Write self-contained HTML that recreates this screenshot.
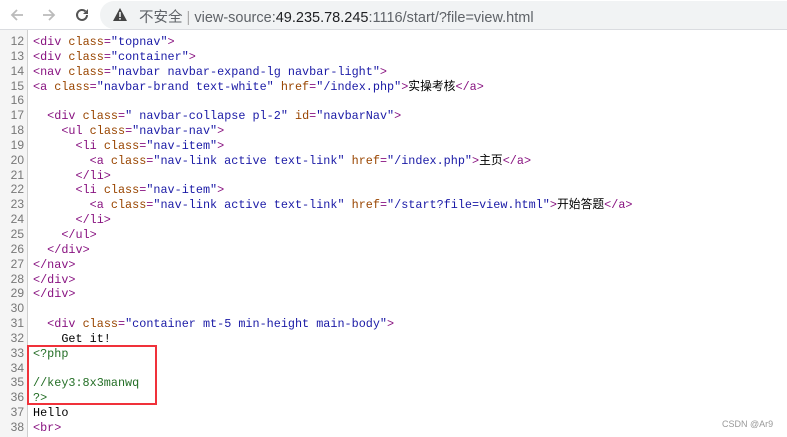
<!DOCTYPE html>
<html><head><meta charset="utf-8"><style>
*{margin:0;padding:0;box-sizing:border-box}
body{width:787px;height:437px;overflow:hidden;background:#fff;font-family:"Liberation Sans","Noto Sans CJK SC",sans-serif;position:relative}
.bar{position:absolute;left:0;top:0;width:787px;height:30px;background:#fff;border-bottom:1px solid #dadce0}
.pill{position:absolute;left:100px;top:1px;width:700px;height:28px;background:#f1f3f4;border-radius:14px}
.url{position:absolute;left:139px;top:6px;font-size:14.5px;color:#5f6368;white-space:nowrap}
.url b{font-weight:normal;color:#202124}
.gut{position:absolute;left:0;top:30px;width:28px;height:407px;background:#f5f5f5;border-right:1px solid #cfcfcf}
.code{position:absolute;left:0;top:34px;font-family:"Liberation Mono","Noto Sans CJK SC",monospace;font-size:11.8px;line-height:14.85px;white-space:pre}
.code div{height:14.85px;overflow:visible}
.ln{display:inline-block;width:24px;text-align:right;color:#777;font-family:"Liberation Sans",sans-serif;font-size:12px;margin-right:9px}
.t{color:#881280}.a{color:#994500}.v{color:#1a1aa6}.c{color:#236e25}
.box{position:absolute;left:27px;top:345px;width:130px;height:60px;border:2px solid #f0313a}
.wm{position:absolute;left:722px;top:419px;font-size:9px;color:#999}
</style></head><body>
<div class="bar">
<svg style="position:absolute;left:9px;top:7px" width="16" height="16" viewBox="0 0 16 16"><path d="M14 8H3M8 3L3 8l5 5" stroke="#bbb" stroke-width="1.8" fill="none"/></svg>
<svg style="position:absolute;left:41px;top:7px" width="16" height="16" viewBox="0 0 16 16"><path d="M2 8h11M8 3l5 5-5 5" stroke="#bbb" stroke-width="1.8" fill="none"/></svg>
<svg style="position:absolute;left:73px;top:6px" width="18" height="18" viewBox="0 0 18 18"><path d="M14 9a5 5 0 1 1-1.5-3.6" stroke="#555" stroke-width="2" fill="none"/><path d="M15 3v5h-5z" fill="#555"/></svg>
<div class="pill"></div>
<svg style="position:absolute;left:113px;top:8px" width="14" height="13" viewBox="0 0 14 13"><path d="M7 0L14 13H0z" fill="#444"/><rect x="6.2" y="4" width="1.6" height="5" fill="#f1f3f4"/><rect x="6.2" y="10" width="1.6" height="1.6" fill="#f1f3f4"/></svg>
<div class="url">不安全 <span style="color:#aaa">|</span> view-source:<b>49.235.78.245</b>:1116/start/?file=view.html</div>
</div>
<div class="gut"></div>
<div class="code"><div><span class="ln">12</span><span class="t">&lt;div </span><span class="a">class</span><span class="t">=</span><span class="v">"topnav"</span><span class="t">&gt;</span></div><div><span class="ln">13</span><span class="t">&lt;div </span><span class="a">class</span><span class="t">=</span><span class="v">"container"</span><span class="t">&gt;</span></div><div><span class="ln">14</span><span class="t">&lt;nav </span><span class="a">class</span><span class="t">=</span><span class="v">"navbar navbar-expand-lg navbar-light"</span><span class="t">&gt;</span></div><div><span class="ln">15</span><span class="t">&lt;a </span><span class="a">class</span><span class="t">=</span><span class="v">"navbar-brand text-white" </span><span class="a">href</span><span class="t">=</span><span class="v">"/index.php"</span><span class="t">&gt;</span>实操考核<span class="t">&lt;/a&gt;</span></div><div><span class="ln">16</span></div><div><span class="ln">17</span>  <span class="t">&lt;div </span><span class="a">class</span><span class="t">=</span><span class="v">" navbar-collapse pl-2" </span><span class="a">id</span><span class="t">=</span><span class="v">"navbarNav"</span><span class="t">&gt;</span></div><div><span class="ln">18</span>    <span class="t">&lt;ul </span><span class="a">class</span><span class="t">=</span><span class="v">"navbar-nav"</span><span class="t">&gt;</span></div><div><span class="ln">19</span>      <span class="t">&lt;li </span><span class="a">class</span><span class="t">=</span><span class="v">"nav-item"</span><span class="t">&gt;</span></div><div><span class="ln">20</span>        <span class="t">&lt;a </span><span class="a">class</span><span class="t">=</span><span class="v">"nav-link active text-link" </span><span class="a">href</span><span class="t">=</span><span class="v">"/index.php"</span><span class="t">&gt;</span>主页<span class="t">&lt;/a&gt;</span></div><div><span class="ln">21</span>      <span class="t">&lt;/li&gt;</span></div><div><span class="ln">22</span>      <span class="t">&lt;li </span><span class="a">class</span><span class="t">=</span><span class="v">"nav-item"</span><span class="t">&gt;</span></div><div><span class="ln">23</span>        <span class="t">&lt;a </span><span class="a">class</span><span class="t">=</span><span class="v">"nav-link active text-link" </span><span class="a">href</span><span class="t">=</span><span class="v">"/start?file=view.html"</span><span class="t">&gt;</span>开始答题<span class="t">&lt;/a&gt;</span></div><div><span class="ln">24</span>      <span class="t">&lt;/li&gt;</span></div><div><span class="ln">25</span>    <span class="t">&lt;/ul&gt;</span></div><div><span class="ln">26</span>  <span class="t">&lt;/div&gt;</span></div><div><span class="ln">27</span><span class="t">&lt;/nav&gt;</span></div><div><span class="ln">28</span><span class="t">&lt;/div&gt;</span></div><div><span class="ln">29</span><span class="t">&lt;/div&gt;</span></div><div><span class="ln">30</span></div><div><span class="ln">31</span>  <span class="t">&lt;div </span><span class="a">class</span><span class="t">=</span><span class="v">"container mt-5 min-height main-body"</span><span class="t">&gt;</span></div><div><span class="ln">32</span>    Get it!</div><div><span class="ln">33</span><span class="c">&lt;?php</span></div><div><span class="ln">34</span></div><div><span class="ln">35</span><span class="c">//key3:8x3manwq</span></div><div><span class="ln">36</span><span class="c">?&gt;</span></div><div><span class="ln">37</span>Hello</div><div><span class="ln">38</span><span class="t">&lt;br&gt;</span></div></div>
<div class="box"></div>
<div class="wm">CSDN @Ar9</div>
</body></html>
